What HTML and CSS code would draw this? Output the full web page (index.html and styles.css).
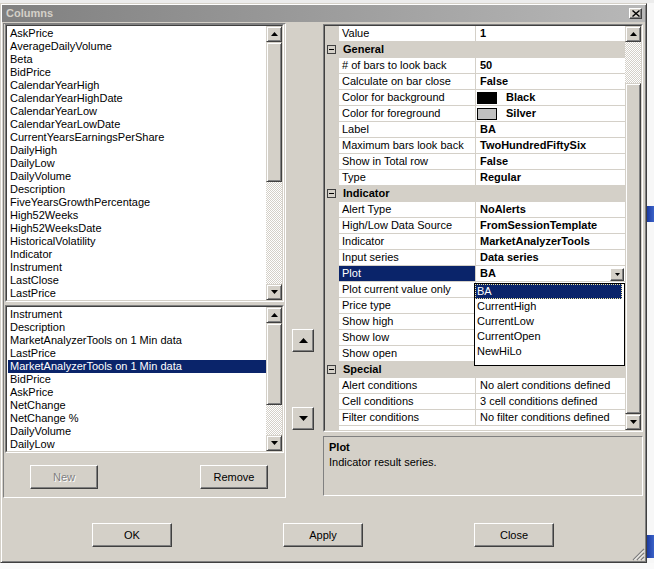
FILE: index.html
```html
<!DOCTYPE html>
<html lang="en">
<head>
<meta charset="UTF-8" />
<title>Columns</title>
<link rel="stylesheet" href="styles.css">
</head>
<body>
<div class="screen">
  <div class="window">

    <div class="titlebar">
      <span class="title">Columns</span>
      <span class="close-btn">
        <svg width="8" height="7" viewBox="0 0 8 7"><path d="M0.5 0.5L7.5 6.5M7.5 0.5L0.5 6.5" stroke="#000" stroke-width="1.4"/></svg>
      </span>
    </div>

    <div class="main">
      <!-- available / selected columns -->
      <div class="left-panel">
        <div class="listbox list-all">
          <div class="listbox-in">
            <div class="items">
              <div class="item">AskPrice</div>
              <div class="item">AverageDailyVolume</div>
              <div class="item">Beta</div>
              <div class="item">BidPrice</div>
              <div class="item">CalendarYearHigh</div>
              <div class="item">CalendarYearHighDate</div>
              <div class="item">CalendarYearLow</div>
              <div class="item">CalendarYearLowDate</div>
              <div class="item">CurrentYearsEarningsPerShare</div>
              <div class="item">DailyHigh</div>
              <div class="item">DailyLow</div>
              <div class="item">DailyVolume</div>
              <div class="item">Description</div>
              <div class="item">FiveYearsGrowthPercentage</div>
              <div class="item">High52Weeks</div>
              <div class="item">High52WeeksDate</div>
              <div class="item">HistoricalVolatility</div>
              <div class="item">Indicator</div>
              <div class="item">Instrument</div>
              <div class="item">LastClose</div>
              <div class="item">LastPrice</div>
            </div>
            <div class="vscroll">
              <div class="sb-btn"><svg width="7" height="4" viewBox="0 0 7 4"><path d="M3.5 0L7 4H0z"/></svg></div>
              <div class="sb-thumb thumb-all"></div>
              <div class="sb-track"></div>
              <div class="sb-btn"><svg width="7" height="4" viewBox="0 0 7 4"><path d="M0 0H7L3.5 4z"/></svg></div>
            </div>
          </div>
        </div>

        <div class="listbox list-used">
          <div class="listbox-in">
            <div class="items">
              <div class="item">Instrument</div>
              <div class="item">Description</div>
              <div class="item">MarketAnalyzerTools on 1 Min data</div>
              <div class="item">LastPrice</div>
              <div class="item selected">MarketAnalyzerTools on 1 Min data</div>
              <div class="item">BidPrice</div>
              <div class="item">AskPrice</div>
              <div class="item">NetChange</div>
              <div class="item">NetChange %</div>
              <div class="item">DailyVolume</div>
              <div class="item">DailyLow</div>
            </div>
            <div class="vscroll">
              <div class="sb-btn"><svg width="7" height="4" viewBox="0 0 7 4"><path d="M3.5 0L7 4H0z"/></svg></div>
              <div class="sb-thumb thumb-used"></div>
              <div class="sb-track"></div>
              <div class="sb-btn"><svg width="7" height="4" viewBox="0 0 7 4"><path d="M0 0H7L3.5 4z"/></svg></div>
            </div>
          </div>
        </div>

        <div class="list-buttons">
          <div class="button small disabled">New</div>
          <div class="button small">Remove</div>
        </div>
      </div>

      <!-- move up / down -->
      <div class="mid">
        <div class="button arrow"><svg width="9" height="5" viewBox="0 0 9 5"><path d="M4.5 0L9 5H0z"/></svg></div>
        <div class="button arrow"><svg width="9" height="5" viewBox="0 0 9 5"><path d="M0 0H9L4.5 5z"/></svg></div>
      </div>

      <!-- properties -->
      <div class="right-panel">
        <div class="grid">
          <div class="grid-in">
            <div class="rows">
              <div class="row"><span class="gut"></span><span class="name">Value</span><span class="val">1</span></div>
              <div class="row cat"><span class="gut"><span class="toggle"></span></span><span class="label">General</span></div>
              <div class="row"><span class="gut"></span><span class="name"># of bars to look back</span><span class="val">50</span></div>
              <div class="row"><span class="gut"></span><span class="name">Calculate on bar close</span><span class="val">False</span></div>
              <div class="row"><span class="gut"></span><span class="name">Color for background</span><span class="val color"><span class="swatch black"></span>Black</span></div>
              <div class="row"><span class="gut"></span><span class="name">Color for foreground</span><span class="val color"><span class="swatch silver"></span>Silver</span></div>
              <div class="row"><span class="gut"></span><span class="name">Label</span><span class="val">BA</span></div>
              <div class="row"><span class="gut"></span><span class="name">Maximum bars look back</span><span class="val">TwoHundredFiftySix</span></div>
              <div class="row"><span class="gut"></span><span class="name">Show in Total row</span><span class="val">False</span></div>
              <div class="row"><span class="gut"></span><span class="name">Type</span><span class="val">Regular</span></div>
              <div class="row cat"><span class="gut"><span class="toggle"></span></span><span class="label">Indicator</span></div>
              <div class="row"><span class="gut"></span><span class="name">Alert Type</span><span class="val">NoAlerts</span></div>
              <div class="row"><span class="gut"></span><span class="name">High/Low Data Source</span><span class="val">FromSessionTemplate</span></div>
              <div class="row"><span class="gut"></span><span class="name">Indicator</span><span class="val">MarketAnalyzerTools</span></div>
              <div class="row"><span class="gut"></span><span class="name">Input series</span><span class="val">Data series</span></div>
              <div class="row"><span class="gut"></span><span class="name sel">Plot</span>
                <span class="val combo">BA
                  <span class="combo-btn"><svg width="5" height="3" viewBox="0 0 5 3"><path d="M0 0H5L2.5 3z"/></svg></span>
                  <div class="dropdown">
                    <div class="dd-item active">BA</div>
                    <div class="dd-item">CurrentHigh</div>
                    <div class="dd-item">CurrentLow</div>
                    <div class="dd-item">CurrentOpen</div>
                    <div class="dd-item">NewHiLo</div>
                  </div>
                </span>
              </div>
              <div class="row"><span class="gut"></span><span class="name">Plot current value only</span><span class="val"></span></div>
              <div class="row"><span class="gut"></span><span class="name">Price type</span><span class="val"></span></div>
              <div class="row"><span class="gut"></span><span class="name">Show high</span><span class="val"></span></div>
              <div class="row"><span class="gut"></span><span class="name">Show low</span><span class="val"></span></div>
              <div class="row"><span class="gut"></span><span class="name">Show open</span><span class="val"></span></div>
              <div class="row cat"><span class="gut"><span class="toggle"></span></span><span class="label">Special</span></div>
              <div class="row"><span class="gut"></span><span class="name">Alert conditions</span><span class="val plain">No alert conditions defined</span></div>
              <div class="row"><span class="gut"></span><span class="name">Cell conditions</span><span class="val plain">3 cell conditions defined</span></div>
              <div class="row"><span class="gut"></span><span class="name">Filter conditions</span><span class="val plain">No filter conditions defined</span></div>
            </div>
            <div class="vscroll">
              <div class="sb-btn"><svg width="7" height="4" viewBox="0 0 7 4"><path d="M3.5 0L7 4H0z"/></svg></div>
              <div class="sb-track track-grid"></div>
              <div class="sb-thumb thumb-grid"></div>
              <div class="sb-btn"><svg width="7" height="4" viewBox="0 0 7 4"><path d="M0 0H7L3.5 4z"/></svg></div>
            </div>
          </div>
        </div>

        <div class="desc">
          <div class="desc-title">Plot</div>
          <div>Indicator result series.</div>
        </div>
      </div>
    </div>

    <div class="footer">
      <div class="button wide">OK</div>
      <div class="button wide">Apply</div>
      <div class="button wide">Close</div>
    </div>

    <svg class="grip" width="13" height="13" viewBox="0 0 13 13">
      <path d="M12 1L1 12M12 5L5 12M12 9L9 12" stroke="#808080" stroke-width="1.2"/>
      <path d="M12 2.5L2.5 12M12 6.5L6.5 12M12 10.5L10.5 12" stroke="#fff" stroke-width="1"/>
    </svg>
  </div>

  <div class="backdrop">
    <div class="bar bar-top"></div>
    <div class="bar bar-bottom"></div>
  </div>
</div>
</body>
</html>
```

FILE: styles.css
```css
* {
  box-sizing: border-box;
}

body {
  margin: 0;
  width: 654px;
  height: 569px;
  overflow: hidden;
  background: #fafafa;
  font-family: "Liberation Sans", Arial, sans-serif;
  font-size: 11px;
  color: #000;
}

.screen {
  display: flex;
  padding-top: 3px;
  height: 563px;
  background: linear-gradient(#ececec 0 3px, transparent 3px);
}

/* dialog frame */
.window {
  position: relative;
  width: 647px;
  height: 560px;
  flex: none;
  background: #d4d0c8;
  border: 1px solid;
  border-color: #d4d0c8 #404040 #404040 #d4d0c8;
  box-shadow: inset 1px 1px #fff, inset -1px -1px #808080;
  padding: 1px;
  display: flex;
  flex-direction: column;
}

.titlebar {
  height: 17px;
  flex: none;
  display: flex;
  align-items: center;
  justify-content: space-between;
  padding: 0 3px 0 4px;
  background: linear-gradient(to right, #808080, #b8b8b8);
}

.title {
  color: #d4d0c8;
  font-weight: bold;
  line-height: 17px;
}

.close-btn {
  width: 13px;
  height: 11px;
  display: flex;
  align-items: center;
  justify-content: center;
  background: #d4d0c8;
  border: 1px solid;
  border-color: #fff #404040 #404040 #fff;
  box-shadow: inset -1px -1px #808080;
}

.main {
  display: flex;
  height: 476px;
  flex: none;
  padding: 1px 0 0 1px;
}

/* left side */
.left-panel {
  width: 283px;
  height: 475px;
  border: 1px solid;
  border-color: #808080 #fff #fff #808080;
  padding: 0 1px;
  display: flex;
  flex-direction: column;
}

.listbox {
  border: 1px solid;
  border-color: #808080 #fff #fff #808080;
}

.listbox-in {
  height: 100%;
  display: flex;
  background: #fff;
  border: 1px solid;
  border-color: #404040 #d4d0c8 #d4d0c8 #404040;
}

.list-all {
  height: 278px;
}

.list-used {
  height: 148px;
  margin-top: 3px;
}

.items {
  flex: 1;
  padding: 1px 0 0 1px;
  overflow: hidden;
}

.item {
  height: 13px;
  line-height: 13px;
  padding-left: 2px;
  white-space: nowrap;
}

.item.selected {
  background: #0a246a;
  color: #fff;
}

.list-buttons {
  display: flex;
  justify-content: space-between;
  margin-top: 12px;
  padding: 0 16px 0 25px;
}

/* scrollbars */
.vscroll {
  width: 16px;
  flex: none;
  display: flex;
  flex-direction: column;
  background: repeating-conic-gradient(#fff 0 25%, #d4d0c8 0 50%) 0 0 / 2px 2px;
}

.sb-btn,
.sb-thumb {
  background: #d4d0c8;
  border: 1px solid;
  border-color: #d4d0c8 #404040 #404040 #d4d0c8;
  box-shadow: inset 1px 1px #fff, inset -1px -1px #808080;
}

.sb-btn {
  height: 16px;
  flex: none;
  display: flex;
  align-items: center;
  justify-content: center;
}

.sb-track {
  flex: 1;
}

.thumb-all {
  height: 140px;
}

.thumb-used {
  height: 82px;
}

.track-grid {
  flex: none;
  height: 41px;
}

.thumb-grid {
  flex: 1;
}

/* buttons */
.button {
  display: flex;
  align-items: center;
  justify-content: center;
  background: #d4d0c8;
  border: 1px solid;
  border-color: #fff #404040 #404040 #fff;
  box-shadow: inset -1px -1px #808080;
}

.button.small {
  width: 68px;
  height: 24px;
}

.button.disabled {
  color: #808080;
  text-shadow: 1px 1px #fff;
}

.button.arrow {
  width: 22px;
  height: 23px;
}

.button.wide {
  width: 80px;
  height: 24px;
}

.mid {
  width: 36px;
  flex: none;
  display: flex;
  flex-direction: column;
  gap: 55px;
  padding: 306px 0 0 6px;
}

/* property grid */
.right-panel {
  padding: 1px 0 0 1px;
}

.grid {
  width: 320px;
  height: 408px;
  border: 1px solid;
  border-color: #808080 #fff #fff #808080;
}

.grid-in {
  height: 100%;
  display: flex;
  background: #fff;
  border: 1px solid;
  border-color: #404040 #d4d0c8 #d4d0c8 #404040;
}

.rows {
  flex: 1;
  background: linear-gradient(to right, #d4d0c8 14px, #fff 14px);
}

.row {
  display: flex;
  height: 16px;
  border-bottom: 1px solid #d4d0c8;
  line-height: 15px;
  white-space: nowrap;
}

.gut {
  width: 14px;
  flex: none;
  background: #d4d0c8;
  padding: 3px 0 0 2px;
}

.name {
  width: 137px;
  flex: none;
  padding-left: 3px;
  border-right: 1px solid #d4d0c8;
  overflow: hidden;
}

.name.sel {
  background: #0a246a;
  color: #fff;
}

.val {
  flex: 1;
  padding-left: 4px;
  font-weight: bold;
}

.val.plain {
  font-weight: normal;
}

.val.color {
  display: flex;
  align-items: center;
  padding-left: 1px;
}

.swatch {
  width: 20px;
  height: 12px;
  margin-right: 9px;
  border: 1px solid #000;
}

.swatch.black {
  background: #000;
}

.swatch.silver {
  background: #c0c0c0;
}

.row.cat {
  background: #d4d0c8;
}

.row.cat .label {
  padding-left: 4px;
  font-weight: bold;
}

.toggle {
  display: block;
  width: 9px;
  height: 9px;
  border: 1px solid #404040;
  background: linear-gradient(#000, #000) center / 5px 1px no-repeat;
}

.val.combo {
  position: relative;
  display: flex;
  justify-content: space-between;
  align-items: flex-start;
}

.combo-btn {
  width: 14px;
  height: 13px;
  margin: 2px 1px 0 0;
  display: flex;
  align-items: center;
  justify-content: center;
  background: #d4d0c8;
  border: 1px solid;
  border-color: #fff #404040 #404040 #fff;
  box-shadow: inset -1px -1px #808080;
}

.dropdown {
  position: absolute;
  top: 17px;
  left: -2px;
  width: 151px;
  height: 83px;
  background: #fff;
  border: 1px solid #000;
  font-weight: normal;
  z-index: 2;
}

.dd-item {
  height: 15px;
  line-height: 15px;
  padding-left: 2px;
  margin-right: 2px;
}

.dd-item.active {
  background: #0a246a;
  color: #fff;
  outline: 1px dotted #f0e6a0;
  outline-offset: -1px;
}

.desc {
  width: 320px;
  height: 60px;
  margin-top: 4px;
  padding: 3px 5px;
  line-height: 15px;
  border: 1px solid;
  border-color: #808080 #fff #fff #808080;
}

.desc-title {
  font-weight: bold;
}

/* dialog buttons */
.footer {
  display: flex;
  gap: 111px;
  padding: 25px 0 0 90px;
}

.grip {
  position: absolute;
  right: 1px;
  bottom: 1px;
}

/* application behind the dialog */
.backdrop {
  flex: 1;
  background: #f7f7f7;
  display: flex;
  flex-direction: column;
}

.bar {
  background: linear-gradient(to right, #1c3aa0, #3a62c8);
}

.bar-top {
  margin-top: 203px;
  height: 16px;
}

.bar-bottom {
  margin-top: 313px;
  height: 23px;
}
```
